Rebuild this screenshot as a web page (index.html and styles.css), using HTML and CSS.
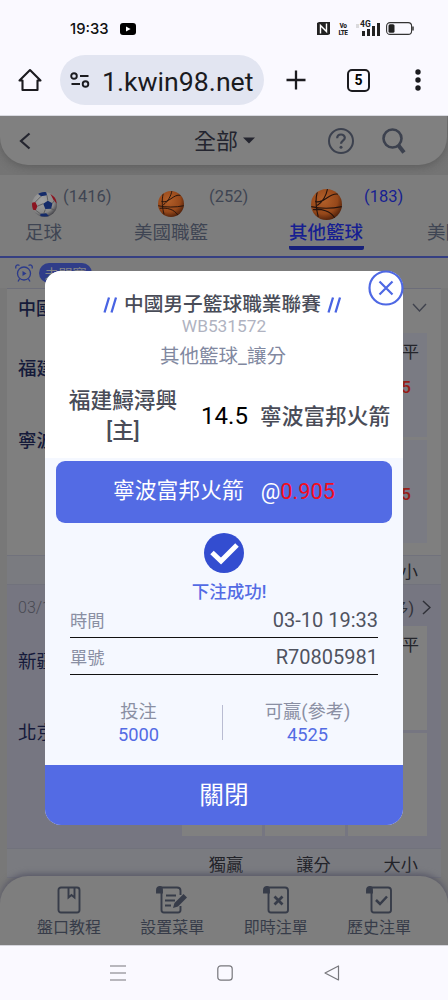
FILE: index.html
```html
<!DOCTYPE html>
<html lang="zh-Hant">
<head>
<meta charset="utf-8">
<title>kwin98</title>
<link rel="stylesheet" href="styles.css">
</head>
<body>
<div class="phone">
  <header class="status">
    <span class="clock">19:33</span>
    <svg class="yt" width="16" height="12" viewBox="0 0 16 12"><rect width="16" height="12" rx="3"/><path d="M6 3.5v5l4.6-2.5z" fill="#fff"/></svg>
    <div class="signals">
      <svg width="13" height="13" viewBox="0 0 13 13"><path d="M0 1 2 0h11v12l-2 1H0z" fill="#222"/><path d="M3.500 11.500V3.500l6 6V1.500" fill="none" stroke="#fff" stroke-width="1.400"/></svg>
      <div class="volte"><span>Vo</span><span>LTE</span></div>
      <div class="cell"><span class="g4">4G</span>
        <svg width="25" height="14" viewBox="0 0 25 14"><path d="M1 3h3M1 5h3" stroke="#bbb"/><path d="M7 9h3v5H7zM12 7h3v7h-3zM17 4h3v10h-3zM22 1h3v13h-3z" fill="#222"/></svg></div>
      <svg width="28" height="13" viewBox="0 0 28 13"><rect x=".6" y=".6" width="25" height="11.8" rx="3.5" fill="none" stroke="#333" stroke-width="1.1"/><rect x="2.5" y="2.3" width="6" height="8.4" rx="1.5" fill="#222"/><path d="M27 4.5v4" stroke="#333" stroke-width="1.5"/></svg>
    </div>
  </header>
  <div class="browser">
    <svg class="home" width="24" height="24" viewBox="0 0 24 24"><path d="M1.500 12.500 12 2l10.500 10.500H19.500v9.500h-15v-9.500z" fill="none" stroke="#1b1b1f" stroke-width="2.100" stroke-linejoin="round"/></svg>
    <div class="url">
      <svg width="20" height="16" viewBox="0 0 20 16" fill="none" stroke="#1b1b1f" stroke-width="1.900"><circle cx="4" cy="4" r="2.800"/><path d="M10 4h8.500M1.500 12h8.500"/><circle cx="15.500" cy="12" r="2.800"/></svg>
      <span>1.kwin98.net</span>
    </div>
    <svg class="plus" width="20" height="20" viewBox="0 0 20 20"><path d="M10 .5v19M.5 10h19" stroke="#1b1b1f" stroke-width="2.300"/></svg>
    <div class="tabcount">5</div>
    <svg class="dots" width="6" height="22" viewBox="0 0 6 22" fill="#1b1b1f"><circle cx="3" cy="3" r="2.700"/><circle cx="3" cy="11" r="2.700"/><circle cx="3" cy="19" r="2.700"/></svg>
  </div>

  <main class="app">
    <div class="topwrap">
      <div class="topbar">
        <svg class="back" width="12" height="18" viewBox="0 0 12 18"><path d="M10.500 1.500 2 9l8.500 7.500" fill="none" stroke="#24252f" stroke-width="2.200"/></svg>
        <div class="all"><span>全部</span><svg width="12" height="7" viewBox="0 0 12 7"><path d="M0 .5h12L6 6.500z" fill="#24252f"/></svg></div>
        <svg class="help" width="26" height="26" viewBox="0 0 26 26" fill="none" stroke="#3c414e" stroke-width="2"><circle cx="13" cy="13" r="12"/><path d="M9.200 10.200c0-5 7.600-4.700 7.600-.4 0 3-3.800 2.800-3.800 6" stroke-width="2.200"/><circle cx="13" cy="19.300" r="1.500" fill="#3c414e" stroke="none"/></svg>
        <svg class="search" width="24" height="26" viewBox="0 0 24 26" fill="none" stroke="#3c414e"><circle cx="10.500" cy="10.500" r="9" stroke-width="2.600"/><path d="m16.500 17.500 5.500 7" stroke-width="4"/></svg>
      </div>
    </div>

    <svg class="defs" width="0" height="0"><defs>
      <radialGradient id="ball" cx=".4" cy=".35" r=".7"><stop offset="0" stop-color="#b3602a"/><stop offset=".65" stop-color="#96481a"/><stop offset="1" stop-color="#4a1d09"/></radialGradient>
      <radialGradient id="soc" cx=".4" cy=".35" r=".7"><stop offset="0" stop-color="#a2a2a2"/><stop offset=".7" stop-color="#888"/><stop offset="1" stop-color="#3b3b42"/></radialGradient>
      <clipPath id="round"><circle cx="15" cy="15" r="15"/></clipPath>
      <symbol id="basket" viewBox="0 0 30 30"><circle cx="15" cy="15" r="15" fill="url(#ball)"/><path clip-path="url(#round)" d="M6 3c-2 8-1 17 1 24M0 17c9 2 20 2 30 0M4 12C12 15 18 3 26 5M2 20c8-1 17 1 21 8M6 16C12 12 15 5 16 0" fill="none" stroke="#25130d" stroke-width="1.100"/></symbol>
    </defs></svg>

    <nav class="sports">
      <div class="sport s1"><div class="sicon"><svg width="25" height="25" viewBox="0 0 30 30"><circle cx="15" cy="15" r="15" fill="url(#soc)"/><g clip-path="url(#round)"><path d="m13.500 14 5.500-3.500 5.500 3-1.500 6.500-7 .5zM7 2l4-3 6 1 1 4-7 1zM10 26l7-.5 4 4H10z" fill="#152b69"/><path d="M-1 13l5-1 2.500 5-2 5-5.500-1zM22 2l6 5 2 7-4-4z" fill="#8b1420"/><path d="m11 5-7 7m9.500 2L6.500 17M19 10.500 18 4m6.500 9.500L27 10m-11 11-2 5m9-6 5 2M4.500 22 10 26" stroke="#555" fill="none"/></g></svg><span>(1416)</span></div><b>足球</b></div>
      <div class="sport s2"><div class="sicon"><svg width="26" height="26"><use href="#basket"/></svg><span>(252)</span></div><b>美國職籃</b></div>
      <div class="sport s3 on"><div class="sicon"><svg width="31" height="31"><use href="#basket"/></svg><span>(183)</span></div><b>其他籃球</b></div>
      <div class="sport s4"><div class="sicon"></div><b>美國</b></div>
    </nav>

    <div class="notice">
      <svg width="18" height="18" viewBox="0 0 18 18" fill="none" stroke="#2b3a8b" stroke-width="1.300"><circle cx="9" cy="9.500" r="6.500"/><path d="M1 4.500C0 2 2 0 4.500 1.500M17 4.500C18 2 16 0 13.500 1.500M4.500 15 3 17.500M13.500 15l1.500 2.500"/><path d="M7.500 7v5l4-2.500z" fill="#2b3a8b" stroke="none"/></svg>
      <span class="chip">未開賽</span>
    </div>

    <section class="match first">
      <div class="league"><span>中國</span><svg width="15" height="9" viewBox="0 0 15 9"><path d="m1 1 6.500 7L14 1" fill="none" stroke="#40434e" stroke-width="1.400"/></svg></div>
      <div class="game">
        <div class="teams"><span>福建</span><span>寧波</span></div>
        <div class="odds"><i></i><i></i><i><em>平</em><strong>5</strong></i><i></i><i></i><i class="low"><strong>5</strong></i></div>
      </div>
    </section>
    <div class="strip mid"><span>大小</span></div>
    <section class="match second">
      <div class="league"><span>03/1</span><p>多)<svg width="9" height="15" viewBox="0 0 9 15"><path d="m1 1 7 6.500L1 14" fill="none" stroke="#303138" stroke-width="1.500"/></svg></p></div>
      <div class="game">
        <div class="teams"><span>新疆</span><span>北京</span></div>
        <div class="odds"><i></i><i></i><i><em>平</em></i><i></i><i></i><i></i></div>
      </div>
    </section>
    <div class="strip"><span>獨贏</span><span>讓分</span><span>大小</span></div>

    <nav class="dock">
      <a><svg width="24" height="28" viewBox="0 0 24 28" fill="none" stroke="#373c49" stroke-width="1.900"><rect x="1.500" y="1.500" width="21" height="25" rx="2.500"/><path d="M11.500 2v9.500l3-2.500 3 2.500V2"/></svg><span>盤口教程</span></a>
      <a><svg width="32" height="28" viewBox="0 0 32 28" fill="none" stroke="#373c49" stroke-width="1.900"><path d="M3 1.500h18q3.500 0 3.500 3V9M24.500 20v4q0 2.500-2.500 2.500H8q-2.500 0-2.500-2.500V5"/><path d="M1 6.500V4q0-3 3-3 2 0 2 3v2.500z" fill="#373c49"/><path d="M10 9.500h10M9 14.500h10M9 19.500h6"/><path d="m17 22 1.500-5 9-9 3.500 3.500-9 9z" fill="#373c49" stroke="none"/></svg><span>設置菜單</span></a>
      <a><svg width="26" height="28" viewBox="0 0 26 28" fill="none" stroke="#373c49" stroke-width="1.900"><path d="M3 1.500h19q3 0 3 3V24q0 2.500-2.500 2.500H8q-2.500 0-2.500-2.500V5"/><path d="M1 6.500V4q0-3 3-3 2 0 2 3v2.500z" fill="#373c49"/><path d="m11.500 10.500 8 8m0-8-8 8" stroke-width="2.700"/></svg><span>即時注單</span></a>
      <a><svg width="26" height="28" viewBox="0 0 26 28" fill="none" stroke="#373c49" stroke-width="1.900"><path d="M3 1.500h19q3 0 3 3V24q0 2.500-2.500 2.500H8q-2.500 0-2.500-2.500V5"/><path d="M1 6.500V4q0-3 3-3 2 0 2 3v2.500z" fill="#373c49"/><path d="m10 14 4 4 7-7.500" stroke-width="2.500"/></svg><span>歷史注單</span></a>
    </nav>

    <div class="modal">
      <svg class="close" width="36" height="36" viewBox="0 0 36 36" fill="none" stroke="#4e68e4" stroke-width="2.200"><circle cx="18" cy="18" r="16.500" fill="#fff"/><path d="m11.500 11.500 13 13m0-13-13 13"/></svg>
      <div class="mhead">
        <h1><svg width="15" height="16" viewBox="0 0 15 16"><path d="M1.500 15.500 6 .5M8.500 15.500l4.500-15" stroke="#4964e3" stroke-width="2.300"/></svg><span>中國男子籃球職業聯賽</span><svg width="15" height="16" viewBox="0 0 15 16"><path d="M1.500 15.500 6 .5M8.500 15.500l4.500-15" stroke="#4964e3" stroke-width="2.300"/></svg></h1>
        <div class="code">WB531572</div>
        <div class="kind">其他籃球_讓分</div>
        <div class="versus"><span class="homeTeam">福建鱘潯興<br>[主]</span><span class="line">14.5</span><span class="away">寧波富邦火箭</span></div>
      </div>
      <div class="mbody">
        <div class="pick"><span class="name">寧波富邦火箭</span><span>@<em>0.905</em></span></div>
        <svg class="ok" width="40" height="40" viewBox="0 0 40 40"><circle cx="20" cy="20" r="20" fill="#334dd0"/><path d="m8 19.500 9 8.500L33 12" fill="none" stroke="#fff" stroke-width="5"/></svg>
        <div class="done">下注成功!</div>
        <div class="row"><span>時間</span><b>03-10 19:33</b></div>
        <div class="row"><span>單號</span><b>R70805981</b></div>
        <div class="sums"><div><span>投注</span><b>5000</b></div><hr><div><span>可贏(參考)</span><b>4525</b></div></div>
      </div>
      <button class="shut">關閉</button>
    </div>
  </main>

  <footer class="sys">
    <svg width="16" height="16" viewBox="0 0 16 16"><path d="M0 1h16M0 8h16M0 15h16" stroke="#77777c" stroke-width="1.200"/></svg>
    <svg width="16" height="16" viewBox="0 0 16 16"><rect x=".8" y=".8" width="14.400" height="14.400" rx="3" fill="none" stroke="#77777c" stroke-width="1.200"/></svg>
    <svg width="16" height="16" viewBox="0 0 16 16"><path d="M14.500 1v14L1 8z" fill="none" stroke="#77777c" stroke-width="1.200" stroke-linejoin="round"/></svg>
  </footer>
</div>
</body>
</html>
```
FILE: styles.css
```css
* { box-sizing: border-box; }
body { margin: 0; font-family: Roboto, "Noto Sans CJK TC", sans-serif; }
svg { display: block; flex: none; }
b, strong, em, i { font-weight: 400; font-style: normal; }
.phone { width: 448px; height: 1000px; overflow: hidden; display: flex; flex-direction: column; background: #faf9ff; }

.status { height: 50px; flex: none; display: flex; align-items: center; padding: 7px 34px 0 70px; }
.clock { font: 500 14.800px/20px Inter, Roboto, sans-serif; width: 50px; color: #111; }
.signals { margin-left: auto; display: flex; align-items: center; }
.volte { display: flex; flex-direction: column; align-items: center; width: 12px; margin: 0 6px 0 7px; font: 700 7.500px/7px "Roboto Condensed", Roboto, sans-serif; letter-spacing: -.5px; color: #222; }
.cell { position: relative; margin-right: 6px; }
.g4 { position: absolute; left: 5px; top: -2px; font: 700 8.500px/9px Roboto, sans-serif; color: #222; background: #faf9ff; }

.browser { height: 66px; flex: none; display: flex; align-items: center; padding: 0 27px 5px 18px; border-bottom: 1px solid #d9dae1; }
.url { margin: 0 22px 0 18px; width: 204px; height: 50px; border-radius: 25px; background: #e2e5f1; display: flex; align-items: center; padding-left: 10px; gap: 12px; font-size: 26.700px; color: #1b1b1f; white-space: nowrap; }
.url span { padding-top: 3px; }
.tabcount { margin: 0 auto 0 41px; width: 23px; height: 23px; border: 2.300px solid #1b1b1f; border-radius: 5px; font: 700 14px/19px Roboto, sans-serif; text-align: center; }

.app { position: relative; height: 829px; flex: none; overflow: hidden; background: #787878; display: flex; flex-direction: column; }
.topwrap { height: 59px; flex: none; background: linear-gradient(#757575, #747474); }
.topbar { height: 49px; margin-right: 1px; border-radius: 0 0 28px 28px; background: #808080; box-shadow: 0 2px 9px rgba(50,50,50,.35); display: flex; align-items: center; padding-left: 19px; }
.all { margin-left: 163px; display: flex; align-items: center; gap: 5px; font-size: 22px; color: #24252f; }
.all span { margin-top: -3px; }
.help { margin-left: 73px; }
.search { margin-left: 28px; }
.defs { position: absolute; }

.sports { height: 83px; flex: none; display: grid; grid-template-columns: 134px 155px 138px 60px; background: #7d7d7d; border-bottom: 2px solid #353f82; color: #3f4553; }
.sport { padding-top: 10px; }
.sicon { height: 38px; display: flex; align-items: center; gap: 6px; font-size: 16.500px; }
.sicon span { margin-bottom: 16px; }
.sport b { display: block; font-size: 18.500px; line-height: 20px; white-space: nowrap; }
.s1 { padding-left: 25px; }
.s1 .sicon { padding-left: 7px; }
.s2 .sicon { padding-left: 24px; gap: 25px; }
.s3 .sicon { padding-left: 22px; gap: 22px; }
.sport.on { color: #171f91; }
.sport.on b { font-weight: 500; width: 75px; height: 27px; border-bottom: 4px solid #17207a; border-radius: 2px; }

.notice { height: 30px; flex: none; display: flex; align-items: center; gap: 6px; padding-left: 15px; background: #7c7c7c; }
.chip { width: 53px; height: 20px; border-radius: 10px; background: #303d89; color: #858585; font-size: 14px; line-height: 22px; text-align: center; }

.match { flex: none; margin: 0 7px; padding: 0 14px 0 11px; color: #151a3a; }
.first { height: 267px; background: #7f7f7f; border-top: 1px solid #6c6d79; }
.second { height: 263px; background: #767681; }
.league { height: 44px; display: flex; justify-content: space-between; align-items: center; font-size: 18px; font-weight: 500; padding-bottom: 8px; }
.second .league { height: 41px; color: #484952; font-size: 16px; font-weight: 400; padding: 3px 0 0; margin-right: -4px; }
.second .league > span { font-weight: 300; }
.league p { margin: 0; display: flex; gap: 8px; align-items: center; color: #303138; }
.game { display: flex; justify-content: space-between; }
.teams { display: flex; flex-direction: column; font-size: 18.500px; line-height: 72px; font-weight: 500; width: 150px; }
.second .teams { font-weight: 400; line-height: 71px; padding-top: 1px; }
.second .game { height: 210px; }
.odds { display: grid; grid-template-columns: 80px 80px 79px; grid-template-rows: 104px 103px; gap: 3px; }
.odds i { background: #7a7b83; display: flex; flex-direction: column; align-items: flex-end; padding: 9px 8px 0 0; font-size: 17px; line-height: 20px; color: #24252b; }
.odds strong { color: #971d18; font-weight: 500; margin: 15px 8px 0 0; }
.odds .low { padding-top: 29px; }
.second .odds i { background: #808080; }
.strip { height: 30px; flex: none; margin: 0 7px; background: #7a7b80; border: solid #71727c; border-width: 1px 0; display: flex; justify-content: flex-end; gap: 53px; padding-right: 23px; font-size: 17.200px; line-height: 33px; color: #222329; }

.dock { position: absolute; left: 0; bottom: 0; width: 448px; height: 69px; border-radius: 28px 28px 0 0; background: #7e7e7e; box-shadow: 0 -2px 6px #565665; display: grid; grid-template-columns: repeat(4, 103.300px); justify-content: center; color: #373c49; padding-top: 10px; }
.dock a { display: flex; flex-direction: column; align-items: center; font-size: 16px; line-height: 28px; }

.modal { position: absolute; left: 45px; top: 155px; width: 358px; height: 554px; border-radius: 16px; background: #f5f8ff; display: flex; flex-direction: column; }
.close { position: absolute; right: -1px; top: -1px; }
.mhead { height: 187px; flex: none; background: #fff; border-radius: 16px 16px 0 0; padding-top: 22px; text-align: center; }
.mhead h1 { margin: 0 3px 0 0; height: 24px; display: flex; justify-content: center; align-items: center; gap: 6px; font-size: 19.700px; line-height: 22px; font-weight: 500; color: #494c58; }
.code { margin-top: -1px; font-size: 17.300px; line-height: 20px; color: #b0b3c1; }
.kind { margin: 9px 2px 0 0; font-size: 19.500px; line-height: 24px; color: #8188a0; }
.versus { margin-top: 17px; height: 60px; display: flex; align-items: center; padding-left: 18px; white-space: nowrap; }
.homeTeam, .away { font-size: 21.700px; line-height: 30px; color: #494c58; font-weight: 500; }
.homeTeam { width: 120px; }
.away { padding-top: 2px; }
.line { margin: 0 12px 0 18px; width: 47px; font-size: 24px; color: #000; }
.mbody { flex: 1; display: flex; flex-direction: column; align-items: center; padding-top: 3px; }
.pick { width: 336px; height: 62px; flex: none; border-radius: 9px; background: #536be4; color: #fff; display: flex; justify-content: center; align-items: center; gap: 17px; font-size: 21.800px; line-height: 32px; }
.pick .name { padding-bottom: 2px; }
.pick em { color: #f30d1d; }
.ok { margin-top: 10px; }
.done { margin: 9px 0 -1px 10px; font-size: 17.500px; line-height: 20px; font-weight: 500; color: #536be4; }
.row { width: 308px; height: 37px; flex: none; border-bottom: 1.500px solid #111; display: flex; justify-content: space-between; align-items: center; font-size: 17.300px; color: #8a8fa3; }
.row b { padding-top: 2px; font-size: 20px; color: #50535f; }
.sums { margin-top: 25px; display: flex; width: 338px; }
.sums div { width: 167px; display: flex; flex-direction: column; align-items: center; font-size: 18.300px; line-height: 23px; color: #8a8fa3; }
.sums div:last-child { width: 169px; }
.sums hr { width: 1px; height: 35px; margin: 5px 0 0; border: 0; background: #b9bcd2; }
.sums b { color: #536be4; }
.shut { height: 60px; flex: none; border: 0; border-radius: 0 0 16px 16px; background: #536be4; color: #fff; font: 400 24.700px/60px Roboto, "Noto Sans CJK TC", sans-serif; padding: 1px 0 0; }

.sys { height: 55px; flex: none; display: flex; justify-content: center; gap: 91px; align-items: center; padding-left: 2px; border-top: 1px solid #d5d5dc; }
```
